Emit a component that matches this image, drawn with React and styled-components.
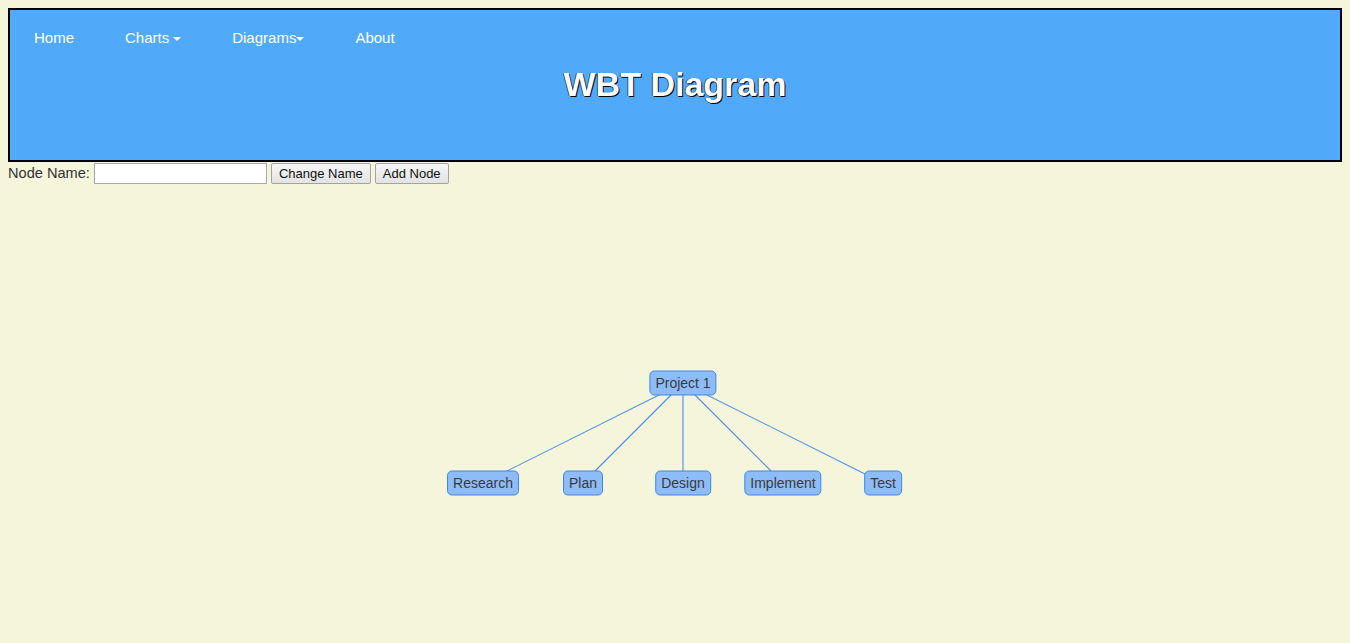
import React from "react"
import styled, { createGlobalStyle } from "styled-components"

const GlobalStyle = createGlobalStyle`
  html, body {
    background: #f5f5dc;
  }
  body {
    margin: 8px;
    font-family: "Liberation Sans", Arial, sans-serif;
    color: #333;
  }
`

// Tree data: centres on the canvas
const root = { name: "Project 1", x: 675, y: 199 }
const children = [
  { name: "Research", x: 475, y: 299 },
  { name: "Plan", x: 575, y: 299 },
  { name: "Design", x: 675, y: 299 },
  { name: "Implement", x: 775, y: 299 },
  { name: "Test", x: 875, y: 299 },
]

const navItems = [
  { label: "Home" },
  { label: "Charts", caret: true, spaced: true },
  { label: "Diagrams", caret: true },
  { label: "About" },
]

export default function App() {
  return (
    <>
      <GlobalStyle />
      <Header>
        <Nav>
          {navItems.map((item) => (
            <NavItem key={item.label}>
              {item.label}
              {item.caret ? <Caret $spaced={item.spaced} /> : null}
            </NavItem>
          ))}
        </Nav>
        <Title>WBT Diagram</Title>
      </Header>

      <Controls>
        <label>Node Name:</label>
        <NameInput type="text" />
        <Btn>Change Name</Btn>
        <Btn>Add Node</Btn>
      </Controls>

      {/* Diagram canvas */}
      <Canvas>
        <Links width="1334" height="458">
          {children.map((c) => (
            <line
              key={c.name}
              x1={root.x}
              y1={root.y}
              x2={c.x}
              y2={c.y}
              stroke="#4a8fe6"
              strokeWidth="1.1"
            />
          ))}
        </Links>
        <Node style={{ left: root.x, top: root.y }}>{root.name}</Node>
        {children.map((c) => (
          <Node key={c.name} style={{ left: c.x, top: c.y }}>
            {c.name}
          </Node>
        ))}
      </Canvas>
    </>
  )
}

// Styled-Components CSS
const Header = styled.header`
  height: 150px;
  border: 2px solid #000;
  background: #50a9f9;
  display: flex;
  flex-direction: column;
`
const Nav = styled.nav`
  display: flex;
  gap: 51px;
  padding: 18px 0 0 24px;
  height: 20px;
`
const NavItem = styled.span`
  display: flex;
  align-items: center;
  color: #fff;
  font-size: 15px;
  line-height: 20px;
`
const Caret = styled.span`
  display: inline-block;
  width: 0;
  height: 0;
  margin-left: ${(p) => (p.$spaced ? "4px" : "0")};
  margin-top: 2px;
  border-top: 4px solid #fff;
  border-left: 4px solid transparent;
  border-right: 4px solid transparent;
`
const Title = styled.h1`
  margin: 16px 0 0;
  text-align: center;
  color: #fff;
  font-size: 34px;
  font-weight: bold;
  line-height: 40px;
  text-shadow: 1px 1px 0 #000, -0.5px 0 0 #000;
`
const Controls = styled.div`
  display: flex;
  align-items: center;
  gap: 4px;
  height: 22px;
  font-size: 14.6px;
  color: #333;
`
const NameInput = styled.input`
  box-sizing: border-box;
  width: 173px;
  height: 21px;
  margin: 0;
  border: 1px solid #a9a9a9;
  background: #fff;
`
const Btn = styled.button`
  box-sizing: border-box;
  height: 21px;
  margin: 0;
  padding: 0 7px;
  font-family: "Liberation Sans", Arial, sans-serif;
  font-size: 13px;
  color: #111;
  border: 1px solid #a3a3a3;
  border-radius: 2px;
  background: linear-gradient(#f6f6f6, #e3e3e3);
`
const Canvas = styled.div`
  position: relative;
  height: 458px;
`
const Links = styled.svg`
  position: absolute;
  left: 0;
  top: 0;
`
const Node = styled.div`
  position: absolute;
  transform: translate(-50%, -50%);
  box-sizing: border-box;
  height: 25px;
  padding: 0 5px;
  line-height: 23px;
  font-size: 14px;
  color: #3a3a3a;
  white-space: nowrap;
  background: #8ebcf8;
  border: 1px solid #3b87e6;
  border-radius: 5px;
`
